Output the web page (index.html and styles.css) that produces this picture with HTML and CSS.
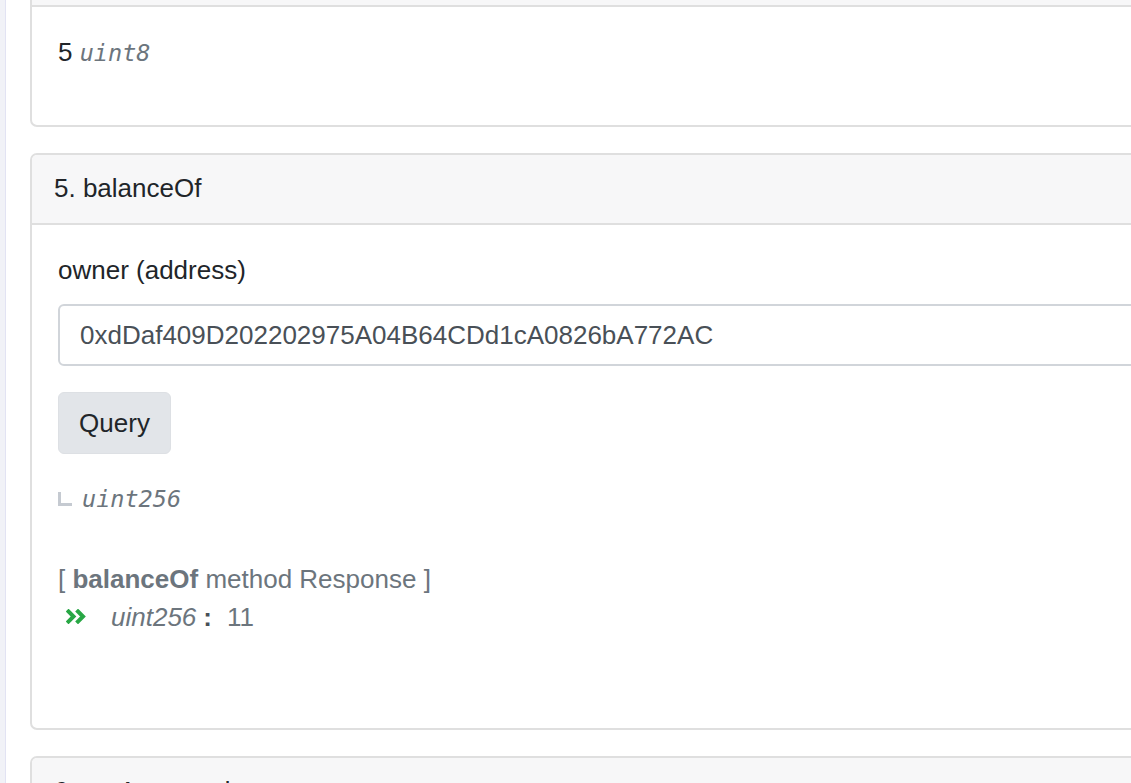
FILE: index.html
```html
<!DOCTYPE html>
<html lang="en">
<head>
<meta charset="utf-8">
<title>Read Contract</title>
<link rel="stylesheet" href="styles.css">
</head>
<body>
<div class="page">
  <aside class="rail"></aside>
  <main class="main">
    <section class="card card-first">
      <div class="card-header">4. decimals</div>
      <div class="card-body">
        <p class="result-line">5 <span class="mono">uint8</span></p>
      </div>
    </section>

    <section class="card card-open">
      <div class="card-header">5. balanceOf</div>
      <div class="card-body body-form">
        <label class="field-label" for="owner">owner (address)</label>
        <input id="owner" class="field-input" type="text" value="0xdDaf409D202202975A04B64CDd1cA0826bA772AC">
        <button class="btn-query" type="button">Query</button>
        <div class="out-type"><span class="corner"></span><span class="mono">uint256</span></div>
        <div class="response">
          <div class="response-title">[ <strong>balanceOf</strong> method Response ]</div>
          <div class="response-row">
            <svg class="chev" width="21" height="15" viewBox="0 0 21 15" aria-hidden="true">
              <path d="M2.5 2.5 L7.5 7.5 L2.5 12.5" fill="none" stroke="#28a745" stroke-width="4" stroke-linecap="square" stroke-linejoin="miter"/>
              <path d="M12 2.5 L17 7.5 L12 12.5" fill="none" stroke="#28a745" stroke-width="4" stroke-linecap="square" stroke-linejoin="miter"/>
            </svg>
            <i class="resp-type">uint256</i><strong class="resp-colon">:</strong><span class="resp-value">11</span>
          </div>
        </div>
      </div>
    </section>

    <section class="card">
      <div class="card-header">6. getApproved</div>
      <div class="card-body"></div>
    </section>
  </main>
</div>
</body>
</html>
```
FILE: styles.css
```css
html, body {
  margin: 0;
  padding: 0;
  background: #ffffff;
}

body {
  font-family: "Liberation Sans", Arial, sans-serif;
  font-size: 26px;
  line-height: 39px;
  color: #212529;
  overflow: hidden;
}

.page {
  display: flex;
  height: 783px;
  overflow: hidden;
}

.rail {
  flex: none;
  width: 5px;
  background: #f1f2f7;
  border-right: 1px solid #e2e3f3;
}

.main {
  flex: 1;
  min-width: 0;
  padding-left: 24px;
  margin-right: -90px;
}

.card {
  border: 2px solid #dfdfdf;
  border-radius: 7px;
  margin-bottom: 26px;
  background: #fff;
  overflow: hidden;
}

.card-first {
  margin-top: -65px;
}

.card-header {
  height: 70px;
  box-sizing: border-box;
  padding: 14px 22px 0;
  background: #f7f7f8;
  border-bottom: 2px solid #dfdfdf;
  color: #212529;
}

.card-body {
  padding: 26px 26px 52px;
}

.result-line {
  margin: 0;
}

.mono {
  font-family: "DejaVu Sans Mono", "Liberation Mono", monospace;
  font-style: italic;
  font-size: 23.5px;
  color: #6c757d;
}

.body-form {
  display: flex;
  flex-direction: column;
  align-items: flex-start;
  padding-bottom: 92px;
}

.field-label {
  display: block;
  color: #212529;
}

.field-input {
  margin-top: 14px;
  width: 100%;
  box-sizing: border-box;
  height: 62px;
  padding: 0 20px;
  border: 2px solid #d1d5da;
  border-radius: 6px;
  font-family: "Liberation Sans", Arial, sans-serif;
  font-size: 26px;
  color: #495057;
  background: #fff;
  outline: none;
}

.btn-query {
  margin-top: 26px;
  height: 62px;
  width: 113px;
  box-sizing: border-box;
  border: 1px solid #dde0e4;
  border-radius: 6px;
  background: #e2e5e9;
  font-family: "Liberation Sans", Arial, sans-serif;
  font-size: 26px;
  color: #212529;
  padding: 0;
}

.out-type {
  margin-top: 26px;
  display: flex;
  align-items: center;
  height: 39px;
}

.corner {
  display: inline-block;
  width: 11px;
  height: 11px;
  border-left: 3px solid #c5cad1;
  border-bottom: 3px solid #c5cad1;
  margin-right: 10px;
  margin-top: -2px;
}

.response {
  margin-top: 41px;
  color: #6c757d;
}

.response-title strong {
  color: #6c757d;
}

.response-row {
  display: flex;
  align-items: center;
  height: 37px;
  padding-left: 8px;
}

.chev {
  display: block;
  margin-right: 24px;
  margin-top: -3px;
}

.resp-type {
  color: #6c757d;
}

.resp-colon {
  margin-left: 7px;
  color: #495057;
}

.resp-value {
  margin-left: 15px;
  color: #6c757d;
}
```
